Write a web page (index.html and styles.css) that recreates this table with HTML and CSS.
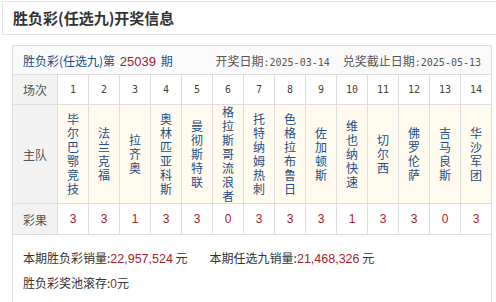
FILE: index.html
```html
<!DOCTYPE html>
<html lang="zh-CN">
<head>
<meta charset="utf-8">
<title>胜负彩(任选九)开奖信息</title>
<link rel="stylesheet" href="styles.css">
</head>
<body>
<div class="page">
  <div class="title-clip"><div class="title-bar"><h1 class="title">胜负彩(任选九)开奖信息</h1></div></div>
  <div class="box">
    <div class="info">
      <div class="issue">胜负彩(任选九)第 <span class="red num">25039</span> 期</div>
      <div class="dates">
        <span class="date"><span class="cjk">开奖日期</span><span class="mono">:2025-03-14</span></span>
        <span class="date"><span class="cjk">兑奖截止日期</span><span class="mono">:2025-05-13</span></span>
      </div>
    </div>
    <table class="grid">
      <colgroup><col class="c-label"><col span="14" class="c-match"></colgroup>
      <tr class="r-head">
        <td class="label">场次</td>
        <td>1</td><td>2</td><td>3</td><td>4</td><td>5</td><td>6</td><td>7</td><td>8</td><td>9</td><td>10</td><td>11</td><td>12</td><td>13</td><td>14</td>
      </tr>
      <tr class="r-team">
        <td class="label">主队</td>
        <td><div class="team">毕尔巴鄂竞技</div></td>
        <td><div class="team">法兰克福</div></td>
        <td><div class="team">拉齐奥</div></td>
        <td><div class="team">奥林匹亚科斯</div></td>
        <td><div class="team">曼彻斯特联</div></td>
        <td><div class="team">格拉斯哥流浪者</div></td>
        <td><div class="team">托特纳姆热刺</div></td>
        <td><div class="team">色格拉布鲁日</div></td>
        <td><div class="team">佐加顿斯</div></td>
        <td><div class="team">维也纳快速</div></td>
        <td><div class="team">切尔西</div></td>
        <td><div class="team">佛罗伦萨</div></td>
        <td><div class="team">吉马良斯</div></td>
        <td><div class="team">华沙军团</div></td>
      </tr>
      <tr class="r-result">
        <td class="label">彩果</td>
        <td>3</td><td>3</td><td>1</td><td>3</td><td>3</td><td>0</td><td>3</td><td>3</td><td>3</td><td>1</td><td>3</td><td>3</td><td>0</td><td>3</td>
      </tr>
    </table>
    <div class="summary">
      <p class="line"><span>本期胜负彩销量:<span class="red num big">22,957,524</span> 元</span><span class="second">本期任选九销量:<span class="red num big">21,468,326</span> 元</span></p>
      <p class="line">胜负彩奖池滚存:<span class="red num">0</span>元</p>
    </div>
  </div>
</div>
</body>
</html>
```

FILE: styles.css
```css
html, body {
  margin: 0;
  padding: 0;
  background: #fff;
  overflow: hidden;
}
body {
  font-family: "Noto Sans CJK SC", "Noto Sans", sans-serif;
  font-size: 12px;
  color: #333;
}
.page {
  padding: 1px 0 0 2px;
  width: 494px;
}
.title-clip {
  width: 494px;
  overflow: hidden;
}
.title-bar {
  border: 1px solid #e4e4e4;
  height: 32px;
  width: 500px;
  display: flex;
  align-items: center;
}
.title {
  margin: 0 0 0 10px;
  font-size: 15px;
  font-weight: bold;
  color: #333;
  line-height: 20px;
}
.box {
  margin: 10px 0 0 10px;
  width: 478px;
  border: 1px solid #dedede;
  border-bottom: none;
}
.info {
  height: 28px;
  background: #fafafa;
  display: flex;
  align-items: center;
  padding: 0 10px 0 10px;
}
.issue {
  color: #1f4d86;
  white-space: pre;
}
.red {
  color: #a5232b;
}
.num {
  font-family: "Liberation Sans", Arial, sans-serif;
  font-size: 12px;
}
.num.big {
  font-size: 12.5px;
}
.issue .num {
  font-size: 13px;
  padding: 0 2px;
}
.dates {
  margin-left: auto;
  display: flex;
  gap: 13px;
  color: #555;
}
.cjk {
  font-family: "Noto Sans CJK SC", sans-serif;
}
.mono {
  font-family: "DejaVu Sans Mono", "Liberation Mono", monospace;
  font-size: 10px;
}
.grid {
  border-collapse: collapse;
  table-layout: fixed;
  width: 480px;
  margin-left: -1px;
}
.c-label { width: 45px; }
.c-match { width: 31px; }
.grid td {
  border: 1px solid #dedede;
  text-align: center;
  padding: 0;
  vertical-align: middle;
}
.grid td.label {
  background: #f2f2f2;
  color: #555;
  font-size: 12px;
}
.r-head td {
  height: 29px;
  font-family: "DejaVu Sans Mono", monospace;
  font-size: 10px;
  color: #444;
}
.r-head td.label { font-family: "Noto Sans CJK SC", sans-serif; }
.r-team td {
  height: 98px;
  background: #fffbef;
}
.team {
  width: 12px;
  margin: 0 auto;
  line-height: 14px;
  color: #1f4d86;
  font-size: 12px;
}
.r-result td {
  height: 30px;
  color: #a5232b;
  font-family: "Liberation Sans", Arial, sans-serif;
  font-size: 12px;
}
.summary {
  padding: 11px 10px 10px 10px;
}
.line {
  margin: 0;
  line-height: 24px;
  color: #333;
  white-space: pre;
}
.second {
  margin-left: 22px;
}
```
